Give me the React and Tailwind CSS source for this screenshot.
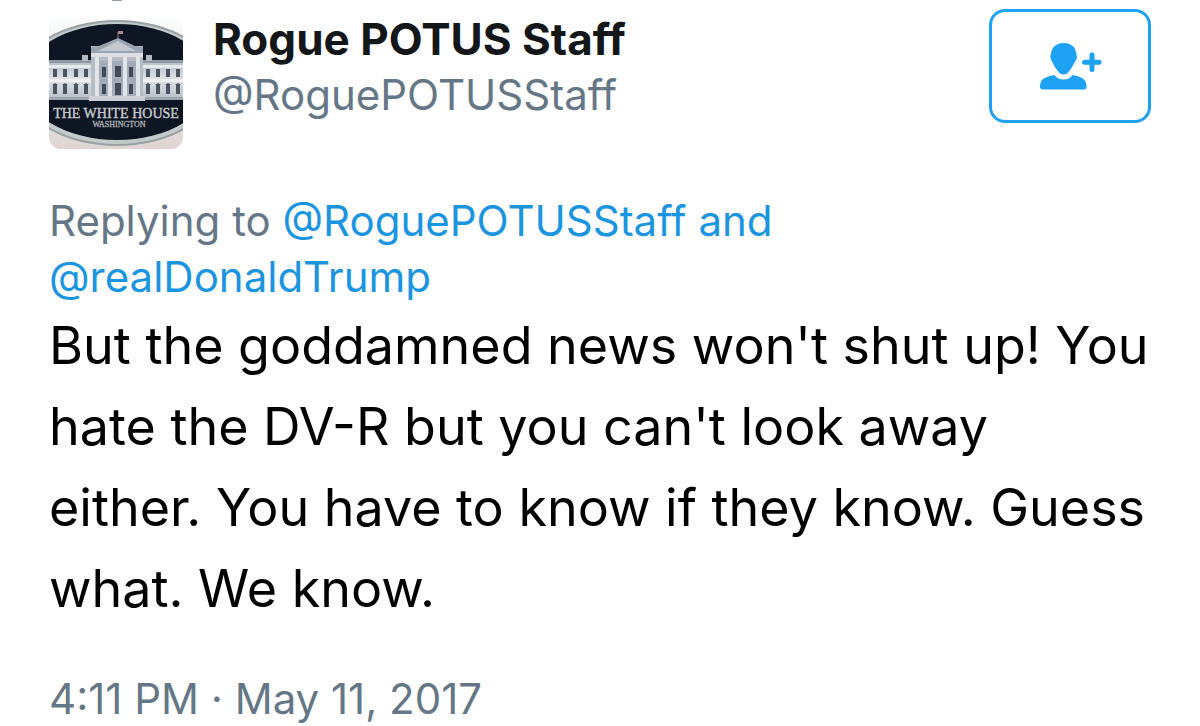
import React, { useState } from "react";

const WING_WINDOWS = [4, 14, 25, 35, 97, 107, 117, 127];
const COLUMNS = [46, 59, 74, 87];

function Avatar() {
  return (
    <svg
      className="size-[134px] shrink-0 rounded-xl"
      viewBox="0 0 134 134"
      role="img"
      aria-label="The White House, Washington"
    >
      <defs>
        <linearGradient id="backdrop" x1="0" y1="0" x2="0" y2="1">
          <stop offset="0" stopColor="#fbfcfc" />
          <stop offset="0.6" stopColor="#e9e6e6" />
          <stop offset="1" stopColor="#dfd5d3" />
        </linearGradient>
        <linearGradient id="stone" x1="0" y1="0" x2="0" y2="1">
          <stop offset="0" stopColor="#b3bbc4" />
          <stop offset="0.5" stopColor="#dfe3e7" />
          <stop offset="1" stopColor="#b9c0c8" />
        </linearGradient>
        <filter id="soften" x="-5%" y="-5%" width="110%" height="110%">
          <feGaussianBlur stdDeviation="0.6" />
        </filter>
      </defs>
      <rect width="134" height="134" fill="url(#backdrop)" />
      <g filter="url(#soften)">
        <ellipse cx="68" cy="68" rx="100" ry="63" fill="#98a1a2" />
        <ellipse cx="68" cy="68" rx="98" ry="61" fill="#c3caca" />
        <ellipse cx="68" cy="67" rx="94" ry="58" fill="#101422" />

        {/* wings */}
        <rect x="-4" y="45" width="142" height="39" fill="url(#stone)" />
        <rect x="-4" y="45" width="142" height="3" fill="#8f98a5" />
        <rect x="-4" y="50" width="142" height="3" fill="#e6e9ec" />
        <rect x="-4" y="64" width="142" height="3" fill="#edf0f2" />
        {WING_WINDOWS.map((x) => (
          <g key={x} fill="#4b525f">
            <rect x={x} y="54" width="4" height="8" />
            <rect x={x} y="69" width="4" height="10" />
            <path d={`M${x - 1} 70l3-2 3 2z`} />
          </g>
        ))}
        <rect x="33" y="40" width="6" height="6" fill="#b4bbc4" />
        <rect x="97" y="40" width="6" height="6" fill="#b4bbc4" />

        {/* portico */}
        <rect x="42" y="31" width="52" height="55" fill="#b6bdc6" />
        <path d="M42 39V32l8-1 19-8 17 8 8 1v7z" fill="#9aa3ae" />
        <path d="M49 36l20-10 18 10z" fill="#c3c9cf" />
        <rect x="42" y="38" width="52" height="4" fill="#dde1e5" />
        <rect x="50" y="46" width="37" height="35" fill="#a4acb7" />
        <g fill="#424a58">
          <rect x="53" y="52" width="4" height="10" />
          <rect x="66" y="51" width="6" height="11" />
          <rect x="80" y="52" width="4" height="10" />
          <rect x="53" y="69" width="4" height="10" />
          <rect x="66" y="68" width="6" height="12" />
          <rect x="80" y="69" width="4" height="10" />
        </g>
        {COLUMNS.map((x) => (
          <rect key={x} x={x} y="42" width="4" height="41" fill="#e1e5e8" />
        ))}
        <rect x="-4" y="82" width="142" height="3" fill="#9da5b0" />
        <rect x="40" y="81" width="56" height="5" fill="#cbd0d6" />
        <path d="M69 24v-7" stroke="#8e8288" />
        <rect x="69" y="16" width="5" height="3" fill="#a48c92" />
      </g>

      <text
        x="67"
        y="103"
        textAnchor="middle"
        fontFamily="Liberation Serif, serif"
        fontSize="14"
        fill="#c6c9cd"
        stroke="#c6c9cd"
        strokeWidth="0.4"
      >
        THE WHITE HOUSE
      </text>
      <text
        x="70"
        y="112"
        textAnchor="middle"
        fontFamily="Liberation Serif, serif"
        fontSize="8"
        fill="#aeb2b8"
        stroke="#aeb2b8"
        strokeWidth="0.3"
      >
        WASHINGTON
      </text>
    </svg>
  );
}

function FollowIcon() {
  return (
    <svg className="h-12 w-16" viewBox="0 0 64 48" fill="currentColor" aria-hidden="true">
      <path d="M25.500 1c-7 0-12 4-12.500 11.500-1 1-.9 3.500.3 5.500C14.500 21 16.500 24.500 19 28c2 3 4 4.500 6.500 4.500S30 31 32 28c2.500-3.500 4.500-7 6-10 1.200-2 1.300-4.500.3-5.500C38 5 33 1 25.500 1z" />
      <path d="M16.500 33c2 3 5 4.500 9 4.500s7-1.500 9-4.500c5 1 9 2 11.500 4.500 2 2 2.500 4.500 2.500 7.500 0 1.500-1 2.500-2.500 2.500h-41.500C3 47.500 2 46.500 2 45c0-3 .5-5.500 2.500-7.500 2.500-2.500 7-3.500 12-4.500z" />
      <path
        d="M54 13v14.500M46.500 20.300h14.500"
        stroke="currentColor"
        strokeWidth="5"
        strokeLinecap="round"
      />
    </svg>
  );
}

function FollowButton() {
  const [following, setFollowing] = useState(false);

  return (
    <button
      type="button"
      aria-label="Follow Rogue POTUS Staff"
      aria-pressed={following}
      onClick={() => setFollowing(!following)}
      className="flex h-[114px] w-[162px] shrink-0 cursor-pointer items-center justify-center rounded-2xl border-[3px] border-[#1da1f2] text-[#1da1f2]"
    >
      <FollowIcon />
    </button>
  );
}

function App() {
  return (
    <main className="bg-white font-['Inter',sans-serif] text-[42px] leading-[56px] text-[#657786]">
      <div className="ml-28 h-px w-2.5 bg-gray-400" />
      <article className="px-[49px]">
        <header className="flex items-start justify-between pt-2">
          <div className="flex gap-[30px]">
            <div className="pt-1.5">
              <Avatar />
            </div>
            <div className="pt-0.5">
              <h1 className="text-[44px] leading-[56px] font-bold text-[#14171a]">
                Rogue POTUS Staff
              </h1>
              <p>@RoguePOTUSStaff</p>
            </div>
          </div>
          <FollowButton />
        </header>

        <p className="mt-11 max-w-[800px]">
          Replying to{" "}
          <a href="#RoguePOTUSStaff" className="text-[#1b95e0]">
            @RoguePOTUSStaff and
          </a>{" "}
          <a href="#realDonaldTrump" className="text-[#1b95e0]">
            @realDonaldTrump
          </a>
        </p>

        <p className="text-[52px] leading-[81px] text-black">
          But the goddamned news won't shut up! You hate the DV-R but you can't
          look away either. You have to know if they know. Guess what. We know.
        </p>

        <p className="mt-[42px]">
          <time dateTime="2017-05-11T16:11">4:11 PM · May 11, 2017</time>
        </p>
      </article>
    </main>
  );
}

export default App;
